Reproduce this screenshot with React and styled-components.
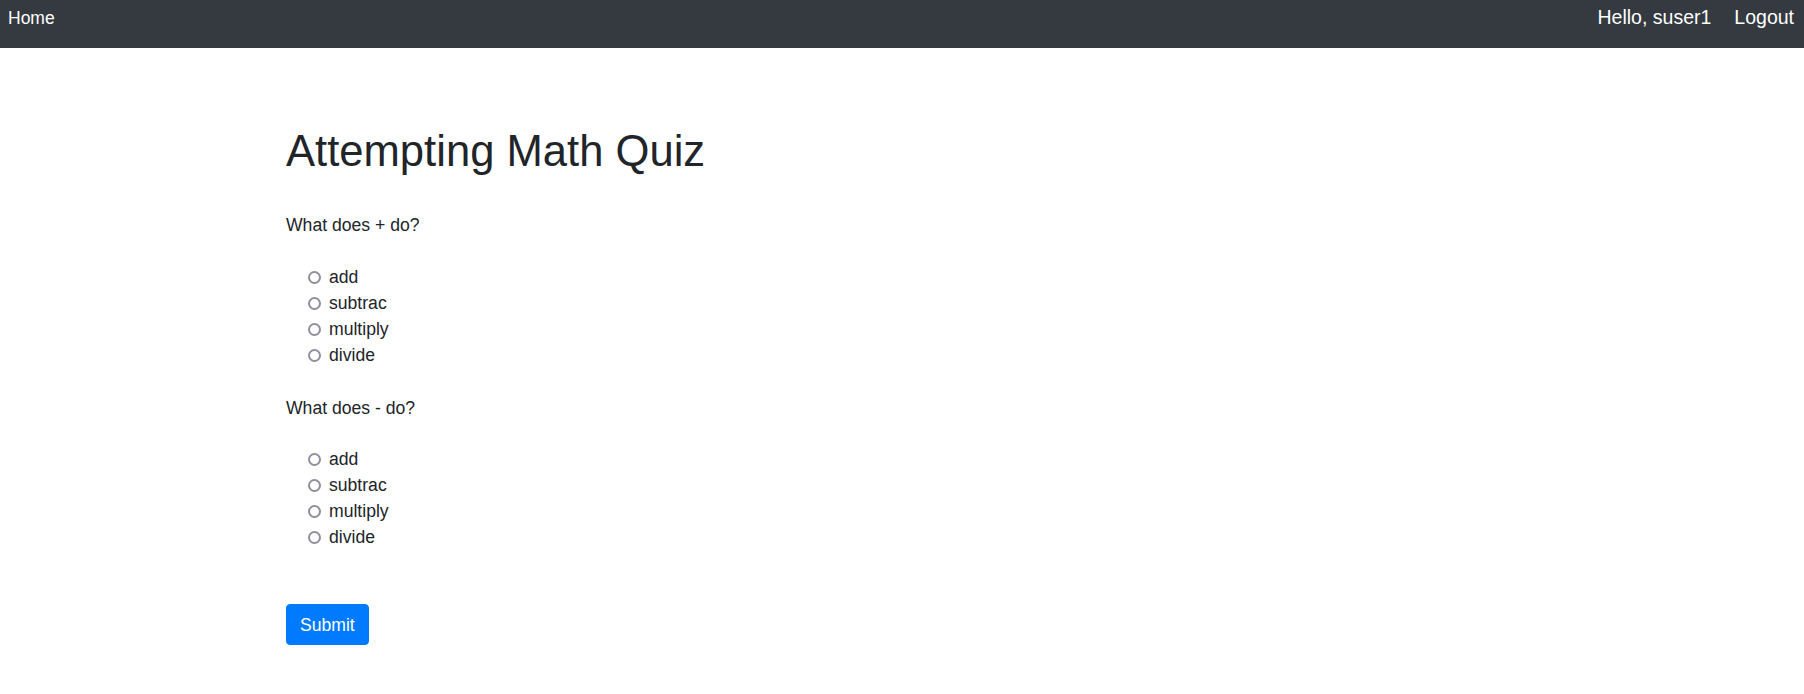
import React from "react";
import styled, { createGlobalStyle } from "styled-components";

const GlobalStyle = createGlobalStyle`
  body {
    margin: 0;
    background: #fff;
    color: #212529;
    font-family: "Liberation Sans", Arial, sans-serif;
  }
`;

const Navbar = styled.nav`
  height: 48px;
  box-sizing: border-box;
  background-color: #343a40;
  display: flex;
  justify-content: space-between;
  align-items: baseline;
  padding: 6px 10px 0 8px;
`;

const NavGroup = styled.div`
  display: flex;
  align-items: baseline;
  gap: 23px;
`;

const NavLink = styled.a`
  color: #fff;
  text-decoration: none;
  font-size: ${(props) => (props.large ? "19.5px" : "17.5px")};
  line-height: normal;
  cursor: pointer;
`;

const Container = styled.main`
  padding: 77px 0 40px 286px;
`;

const Title = styled.h1`
  margin: 0 0 35px;
  font-size: 43.6px;
  font-weight: 400;
  line-height: 1.2;
`;

const Form = styled.form`
  font-size: 17.6px;
  line-height: 26px;
`;

const Question = styled.div`
  margin-bottom: 26.5px;
`;

const QuestionText = styled.p`
  margin: 0 0 25.8px;
`;

const OptionList = styled.div`
  display: flex;
  flex-direction: column;
  padding-left: 22px;
`;

const Option = styled.label`
  display: flex;
  align-items: center;
  gap: 8px;
  cursor: pointer;
`;

const Radio = styled.input.attrs({ type: "radio" })`
  appearance: none;
  box-sizing: border-box;
  width: 13px;
  height: 13px;
  margin: 1px 0 0;
  border: 2px solid #8f8f9d;
  border-radius: 50%;
  background: #fff;
  &:checked {
    border: 4px solid #0060df;
  }
`;

const SubmitButton = styled.button`
  margin-top: 27.5px;
  height: 41px;
  padding: 0 13px;
  border: 1px solid #007bff;
  border-radius: 4px;
  background-color: #007bff;
  color: #fff;
  font-family: "Liberation Sans", Arial, sans-serif;
  font-size: 17.6px;
  line-height: 1.5;
  cursor: pointer;
`;

const questions = [
  { id: "q1", text: "What does + do?", options: ["add", "subtrac", "multiply", "divide"] },
  { id: "q2", text: "What does - do?", options: ["add", "subtrac", "multiply", "divide"] },
];

export default function App() {
  return (
    <>
      <GlobalStyle />
      <Navbar>
        <NavLink>Home</NavLink>
        <NavGroup>
          <NavLink large>Hello, suser1</NavLink>
          <NavLink large>Logout</NavLink>
        </NavGroup>
      </Navbar>
      <Container>
        <Title>Attempting Math Quiz</Title>
        <Form onSubmit={(e) => e.preventDefault()}>
          {questions.map((q) => (
            <Question key={q.id}>
              <QuestionText>{q.text}</QuestionText>
              <OptionList>
                {q.options.map((opt) => (
                  <Option key={opt}>
                    <Radio name={q.id} value={opt} />
                    {opt}
                  </Option>
                ))}
              </OptionList>
            </Question>
          ))}
          <SubmitButton type="submit">Submit</SubmitButton>
        </Form>
      </Container>
    </>
  );
}
